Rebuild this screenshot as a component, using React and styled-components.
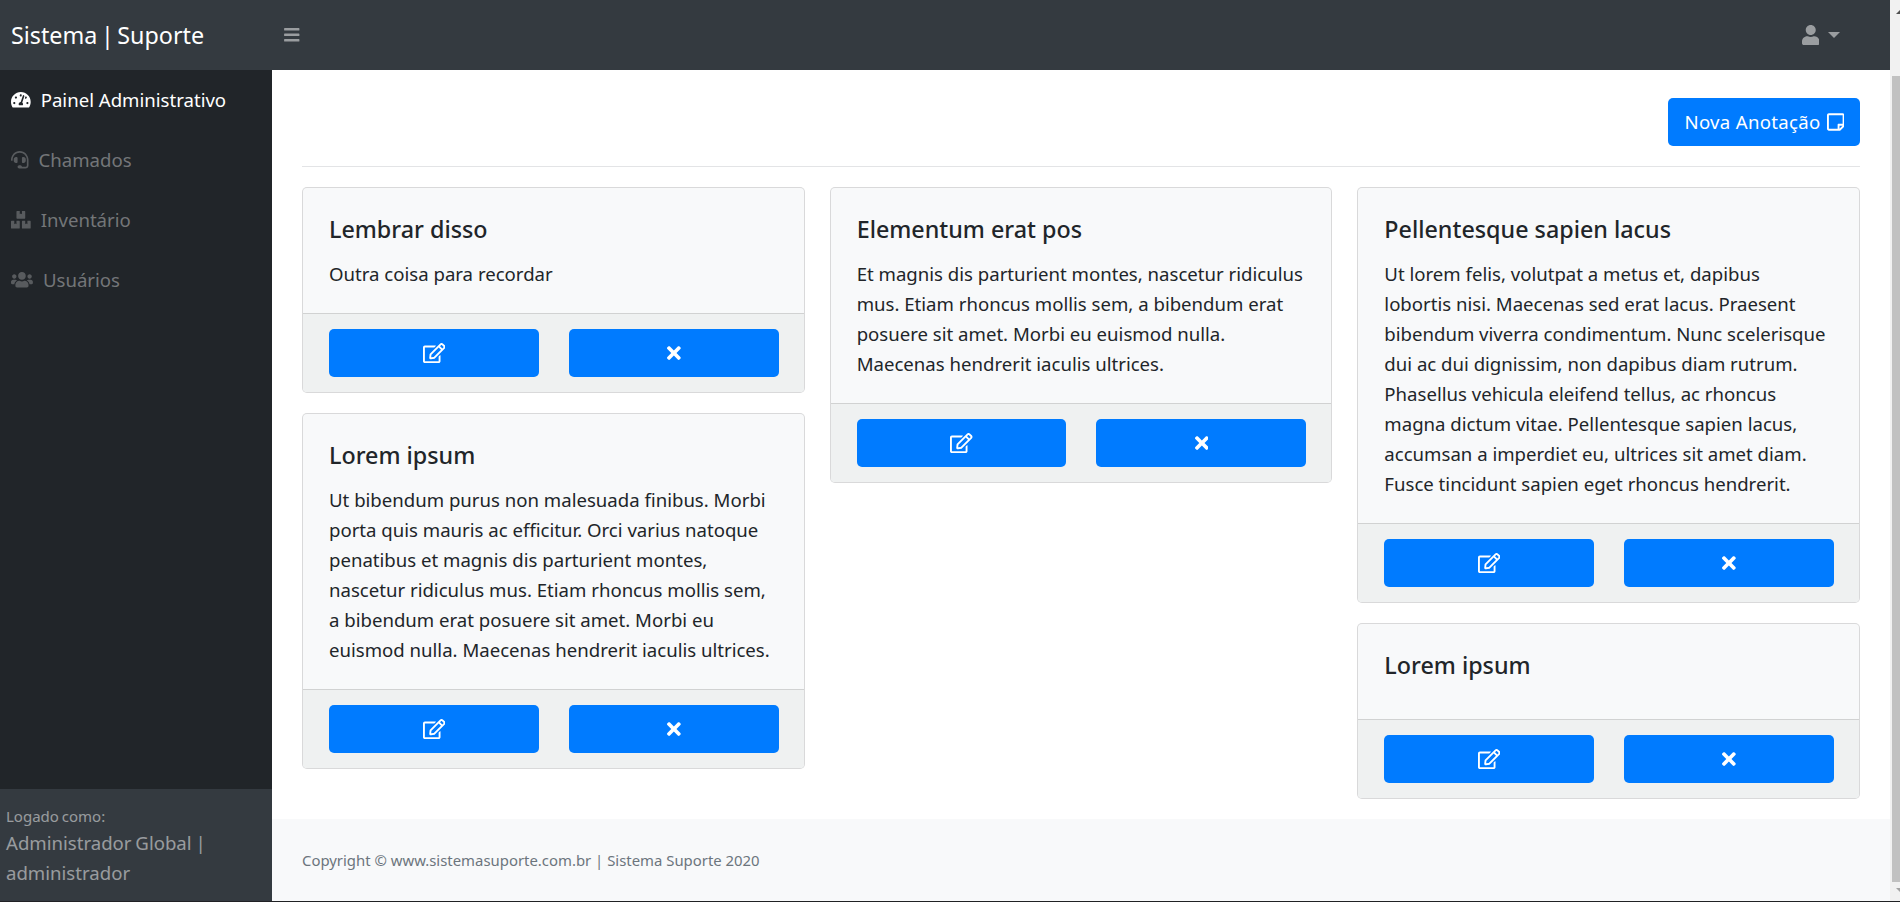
import React from 'react'
import styled, { createGlobalStyle } from 'styled-components'
import { FaTachometerAlt, FaHeadset, FaBoxes, FaUsers, FaBars, FaUser, FaRegStickyNote, FaRegEdit, FaTimes } from 'react-icons/fa'

const GlobalStyle = createGlobalStyle`
  html, body { margin: 0; padding: 0; height: 100%; overflow: hidden; }
  body {
    font-family: "Noto Sans", "Open Sans", Arial, sans-serif;
    font-size: 18.6px;
    line-height: 30px;
    color: #212529;
    background: #fff;
  }
  * { box-sizing: border-box; }
`

const Page = styled.div`
  display: flex;
  flex-direction: column;
  height: 902px;
`
const Window = styled.div`
  flex: 1;
  min-height: 0;
  display: flex;
`
const BottomEdge = styled.div`
  height: 1px;
  flex: none;
  background: #202124;
`
const Wrapper = styled.div`
  flex: 1;
  min-width: 0;
  display: flex;
  flex-direction: column;
`
const ScrollTrack = styled.div`
  width: 10px;
  background: #f1f1f1;
  display: flex;
  flex-direction: column;
  align-items: flex-end;
`
const ScrollArrow = styled.svg`
  width: 10px;
  height: ${p => p.$h}px;
  flex: none;
`
const ScrollThumb = styled.div`
  width: 8px;
  height: 806px;
  margin-top: 52px;
  background: #c1c1c1;
  flex: none;
`
const TopBar = styled.header`
  height: 70px;
  background: #343a40;
  display: flex;
  align-items: center;
  flex: none;
`
const Brand = styled.div`
  width: 272px;
  padding-left: 11px;
  font-size: 23.3px;
  word-spacing: -2.5px;
  color: #fff;
  flex: none;
`
const Toggle = styled.div`
  margin-left: 11px;
  color: rgba(255, 255, 255, 0.5);
  display: flex;
  font-size: 17.5px;
`
const UserMenu = styled.div`
  margin-left: auto;
  margin-right: 50px;
  color: rgba(255, 255, 255, 0.5);
  display: flex;
  align-items: center;
  gap: 9px;
  svg { height: 20px; width: 17.5px; }
`
const Caret = styled.span`
  width: 0;
  height: 0;
  border-top: 6px solid rgba(255, 255, 255, 0.5);
  border-left: 6px solid transparent;
  border-right: 6px solid transparent;
`
const Body = styled.div`
  flex: 1;
  min-height: 0;
  display: flex;
`
const Sidebar = styled.aside`
  width: 272px;
  flex: none;
  background: #212529;
  display: flex;
  flex-direction: column;
`
const SideNav = styled.nav`
  flex: 1;
  display: flex;
  flex-direction: column;
`
const SideItem = styled.a`
  height: 60px;
  padding-left: 11px;
  display: flex;
  align-items: center;
  gap: 10px;
  color: ${p => (p.$active ? '#fff' : 'rgba(255, 255, 255, 0.38)')};
  svg {
    height: 17.5px;
    width: ${p => p.$iconWidth}px;
    flex: none;
    color: ${p => (p.$active ? '#fff' : 'rgba(255, 255, 255, 0.25)')};
  }
`
const SideFooter = styled.div`
  background: #343a40;
  height: 112px;
  padding: 15px 6px 0;
  color: rgba(255, 255, 255, 0.5);
  word-spacing: -1px;
`
const Small = styled.div`
  font-size: 15px;
  line-height: 24px;
`
const Main = styled.main`
  flex: 1;
  min-width: 0;
  display: flex;
  flex-direction: column;
  background: #fff;
`
const Content = styled.div`
  flex: 1;
  padding: 28px 30px 0;
`
const Actions = styled.div`
  display: flex;
  justify-content: flex-end;
  padding-bottom: 20px;
  border-bottom: 1px solid #e3e4e6;
  margin-bottom: 20px;
`
const Button = styled.button`
  height: 48px;
  border: 0;
  border-radius: 5px;
  background: #007bff;
  color: #fff;
  font: inherit;
  letter-spacing: ${p => (p.$wide ? '0.3px' : '0')};
  display: flex;
  align-items: center;
  justify-content: center;
  gap: 6px;
  padding: ${p => (p.$wide ? '0 16px 0 17px' : '0')};
  svg { height: 20px; width: ${p => p.$iconWidth}px; flex: none; }
`
const Columns = styled.div`
  display: grid;
  grid-template-columns: repeat(3, 1fr);
  gap: 25px;
  align-items: start;
`
const Column = styled.div`
  display: flex;
  flex-direction: column;
  gap: 20px;
`
const Card = styled.article`
  background: #f8f9fa;
  border: 1px solid rgba(0, 0, 0, 0.125);
  border-radius: 5px;
`
const CardBody = styled.div`
  padding: 26px 25px 24px 26px;
`
const CardTitle = styled.h5`
  margin: 0 0 15px;
  font-size: 23.3px;
  font-weight: 500;
  line-height: 30px;
`
const CardText = styled.p`
  margin: 0;
`
const CardFooter = styled.div`
  display: grid;
  grid-template-columns: 1fr 1fr;
  gap: 30px;
  padding: 15px 25px 15px 26px;
  background: #eff1f1;
  border-top: 1px solid rgba(0, 0, 0, 0.125);
  border-radius: 0 0 4px 4px;
`
const Footer = styled.footer`
  height: 82px;
  flex: none;
  background: #f8f9fa;
  color: #6c757d;
  font-size: 14.9px;
  padding: 0 30px;
  display: flex;
  align-items: center;
`

const nav = [
  { label: 'Painel Administrativo', Icon: FaTachometerAlt, width: 19.7, active: true },
  { label: 'Chamados', Icon: FaHeadset, width: 17.5 },
  { label: 'Inventário', Icon: FaBoxes, width: 19.7 },
  { label: 'Usuários', Icon: FaUsers, width: 21.9 },
]

const columns = [
  [
    { title: 'Lembrar disso', text: 'Outra coisa para recordar' },
    { title: 'Lorem ipsum', text: 'Ut bibendum purus non malesuada finibus. Morbi porta quis mauris ac efficitur. Orci varius natoque penatibus et magnis dis parturient montes, nascetur ridiculus mus. Etiam rhoncus mollis sem, a bibendum erat posuere sit amet. Morbi eu euismod nulla. Maecenas hendrerit iaculis ultrices.' },
  ],
  [
    { title: 'Elementum erat pos', text: 'Et magnis dis parturient montes, nascetur ridiculus mus. Etiam rhoncus mollis sem, a bibendum erat posuere sit amet. Morbi eu euismod nulla. Maecenas hendrerit iaculis ultrices.' },
  ],
  [
    { title: 'Pellentesque sapien lacus', text: 'Ut lorem felis, volutpat a metus et, dapibus lobortis\u00a0nisi. Maecenas sed erat lacus. Praesent bibendum viverra condimentum. Nunc scelerisque dui ac dui dignissim, non dapibus diam rutrum. Phasellus vehicula eleifend tellus, ac rhoncus magna dictum vitae. Pellentesque sapien lacus, accumsan a imperdiet eu, ultrices sit amet diam. Fusce tincidunt sapien eget rhoncus hendrerit.' },
    { title: 'Lorem ipsum', text: '' },
  ],
]

const NoteCard = ({ title, text }) => (
  <Card>
    <CardBody>
      <CardTitle>{title}</CardTitle>
      <CardText>{text}</CardText>
    </CardBody>
    <CardFooter>
      <Button $iconWidth={22.5}><FaRegEdit /></Button>
      <Button $iconWidth={13.75}><FaTimes /></Button>
    </CardFooter>
  </Card>
)

export default function App() {
  return (
    <Page>
      <GlobalStyle />
      <Window>
        <Wrapper>
          <TopBar>
            <Brand>Sistema | Suporte</Brand>
            <Toggle><FaBars /></Toggle>
            <UserMenu><FaUser /><Caret /></UserMenu>
          </TopBar>
          <Body>
            <Sidebar>
              <SideNav>
                {nav.map(({ label, Icon, width, active }) => (
                  <SideItem key={label} $active={active} $iconWidth={width}><Icon />{label}</SideItem>
                ))}
              </SideNav>
              <SideFooter>
                <Small>Logado como:</Small>
                <div>Administrador Global | administrador</div>
              </SideFooter>
            </Sidebar>
            <Main>
              <Content>
                <Actions>
                  <Button $wide $iconWidth={17.5}>Nova Anotação<FaRegStickyNote /></Button>
                </Actions>
                <Columns>
                  {columns.map((cards, i) => (
                    <Column key={i}>
                      {cards.map((c, j) => <NoteCard key={j} {...c} />)}
                    </Column>
                  ))}
                </Columns>
              </Content>
              <Footer>Copyright © www.sistemasuporte.com.br | Sistema Suporte 2020</Footer>
            </Main>
          </Body>
        </Wrapper>
        <ScrollTrack>
          <ScrollArrow $h={24} viewBox="0 0 10 24"><path d="M10 10v4H6z" fill="#505050" /></ScrollArrow>
          <ScrollThumb />
          <ScrollArrow $h={19} viewBox="0 0 10 19"><path d="M6 6h4v4z" fill="#a3a3a3" /></ScrollArrow>
        </ScrollTrack>
      </Window>
      <BottomEdge />
    </Page>
  )
}
